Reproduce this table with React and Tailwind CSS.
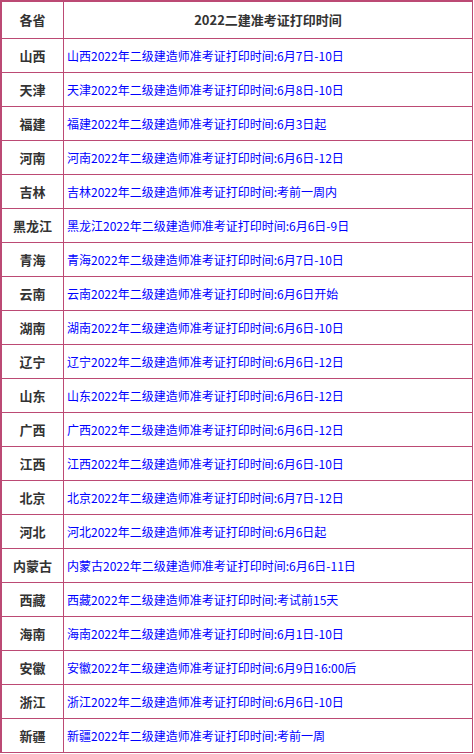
import React from "react";

const rows = [
  ["山西", "6月7日-10日"],
  ["天津", "6月8日-10日"],
  ["福建", "6月3日起"],
  ["河南", "6月6日-12日"],
  ["吉林", "考前一周内"],
  ["黑龙江", "6月6日-9日"],
  ["青海", "6月7日-10日"],
  ["云南", "6月6日开始"],
  ["湖南", "6月6日-10日"],
  ["辽宁", "6月6日-12日"],
  ["山东", "6月6日-12日"],
  ["广西", "6月6日-12日"],
  ["江西", "6月6日-10日"],
  ["北京", "6月7日-12日"],
  ["河北", "6月6日起"],
  ["内蒙古", "6月6日-11日"],
  ["西藏", "考试前15天"],
  ["海南", "6月1日-10日"],
  ["安徽", "6月9日16:00后"],
  ["浙江", "6月6日-10日"],
  ["新疆", "考前一周"],
];

export default function App() {
  return (
    <div
      className="bg-white w-[474px] h-[754px] overflow-hidden"
      style={{ fontFamily: '"Noto Sans CJK SC", "Liberation Sans", sans-serif' }}
    >
      <div className="w-[473px] border-l-2 border-t-2 border-r border-[#bc4a74]">
        <div className="flex h-[37px] border-b border-[#bc4a74]">
          <div className="w-[62px] border-r border-[#bc4a74] flex items-center justify-center text-[13px] font-bold text-[#333333]">
            各省
          </div>
          <div className="flex-1 flex items-center justify-center text-[13px] font-bold text-[#333333]">
            2022二建准考证打印时间
          </div>
        </div>
        {rows.map(([p, t]) => (
          <div key={p} className="flex h-[34px] border-b border-[#bc4a74]">
            <div className="w-[62px] border-r border-[#bc4a74] flex items-center justify-center text-[13px] font-bold text-[#333333]">
              {p}
            </div>
            <div className="flex-1 flex items-center pl-[3px] text-[12px] text-[#0000ff]">
              {p}2022年二级建造师准考证打印时间:{t}
            </div>
          </div>
        ))}
      </div>
    </div>
  );
}
